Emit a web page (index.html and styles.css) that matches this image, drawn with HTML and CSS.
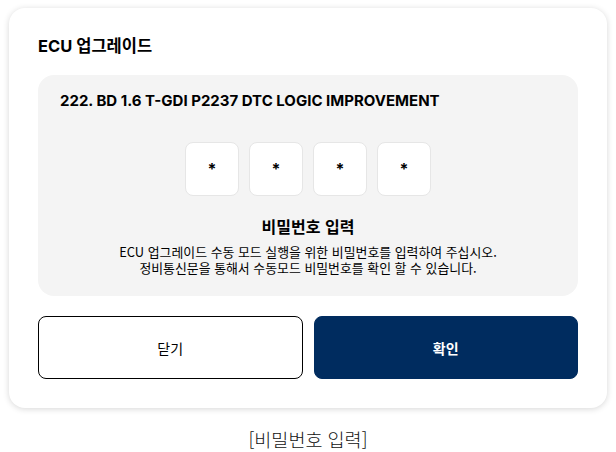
FILE: index.html
```html
<!DOCTYPE html>
<html lang="ko">

<head>
    <meta charset="UTF-8">
    <meta name="viewport" content="width=device-width, initial-scale=1.0">
    <title>ECU 업그레이드</title>
    <link rel="stylesheet" href="styles.css">
</head>

<body>

    <div class="dialog">
        <h1>ECU 업그레이드</h1>

        <!-- Password Panel -->
        <div class="panel">
            <div class="item-name">222. BD 1.6 T-GDI P2237 DTC LOGIC IMPROVEMENT</div>

            <div class="pin-group">
                <div class="pin">*</div>
                <div class="pin">*</div>
                <div class="pin">*</div>
                <div class="pin">*</div>
            </div>

            <h2>비밀번호 입력</h2>
            <p class="desc">
                ECU 업그레이드 수동 모드 실행을 위한 비밀번호를 입력하여 주십시오.<br>
                정비통신문을 통해서 수동모드 비밀번호를 확인 할 수 있습니다.
            </p>
        </div>

        <!-- Buttons -->
        <div class="button-group">
            <button class="btn-close">닫기</button>
            <button class="btn-ok">확인</button>
        </div>
    </div>

    <div class="caption">[비밀번호 입력]</div>

</body>

</html>
```

FILE: styles.css
```css
body {
    font-family: "Inter", "Noto Sans CJK KR", sans-serif;
    background-color: #ffffff;
    color: #000;
    margin: 0;
    padding: 8px 9px 0 9px;
}

.dialog {
    background-color: #ffffff;
    border-radius: 16px;
    box-shadow: 0 1px 6px rgba(0, 0, 0, 0.16);
    padding: 27px 29px 29px 29px;
}

h1 {
    font-size: 16.5px;
    font-weight: 700;
    margin: 0 0 18px 0;
    line-height: 22px;
}

.panel {
    background-color: #f4f4f4;
    border-radius: 16px;
    padding: 16px 22px 20px 22px;
    text-align: center;
}

.item-name {
    text-align: left;
    font-size: 15px;
    font-weight: 700;
    line-height: 20px;
}

.pin-group {
    display: flex;
    justify-content: center;
    gap: 10px;
    margin-top: 31px;
}

.pin {
    width: 52px;
    height: 52px;
    background-color: #ffffff;
    border: 1px solid #e6e6e6;
    border-radius: 8px;
    display: flex;
    justify-content: center;
    align-items: center;
    font-size: 16px;
    font-weight: 700;
}

h2 {
    font-family: "Noto Sans CJK KR", sans-serif;
    font-size: 16px;
    font-weight: 700;
    margin: 18px 0 6px 0;
    line-height: 24px;
}

.desc {
    font-family: "Noto Sans CJK KR", sans-serif;
    font-size: 12.9px;
    line-height: 16px;
    margin: 0;
}

.button-group {
    display: flex;
    gap: 11px;
    margin-top: 20px;
}

.button-group button {
    flex: 1;
    height: 63px;
    padding: 0;
    border-radius: 8px;
    font-family: "Noto Sans CJK KR", sans-serif;
    font-size: 14px;
    cursor: pointer;
}

.btn-close {
    background-color: #ffffff;
    border: 1px solid #000;
    color: #000;
}

.btn-ok {
    background-color: #002c5f;
    border: 1px solid #002c5f;
    color: #fff;
    font-weight: 700;
}

.caption {
    font-family: "Noto Sans CJK KR", sans-serif;
    text-align: center;
    font-size: 18.5px;
    font-weight: 300;
    line-height: 24px;
    margin-top: 19px;
    color: #111;
}
```
